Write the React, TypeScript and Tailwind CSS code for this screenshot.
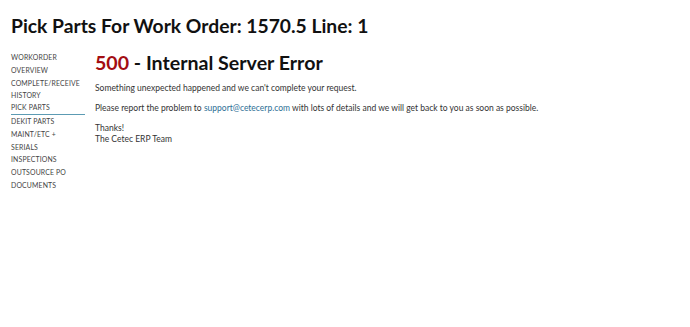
import React from 'react';

const navItems = [
  'WORKORDER',
  'OVERVIEW',
  'COMPLETE/RECEIVE',
  'HISTORY',
  'PICK PARTS',
  'DEKIT PARTS',
  'MAINT/ETC +',
  'SERIALS',
  'INSPECTIONS',
  'OUTSOURCE PO',
  'DOCUMENTS',
];

export default function App() {
  return (
    <div className="min-h-[327px] w-[690px] bg-white text-[#222] font-['Lato',sans-serif]">
      <h1 className="pl-[11px] pt-[14px] text-[19.3px] font-bold leading-[24px] text-[#111]">
        Pick Parts For Work Order: 1570.5 Line: 1
      </h1>

      <div className="flex pl-[11px] pt-[13px]">
        <ul className="w-[74px] shrink-0 text-[6.9px] leading-[12.8px] text-[#444] tracking-[0.15px]">
          {navItems.map((item) => (
            <li
              key={item}
              className={item === 'PICK PARTS' ? 'border-b border-[#5c9bb3] leading-[11.8px]' : ''}
            >
              {item}
            </li>
          ))}
        </ul>

        <div className="ml-[10px]">
          <h2 className="text-[19.6px] font-bold leading-[24px] text-[#111]">
            <span className="text-[#a30d12]">500</span> - Internal Server Error
          </h2>
          <div className="mt-[8px] text-[8.5px] leading-[11px] text-[#333]">
            <p>Something unexpected happened and we can't complete your request.</p>
            <p className="mt-[9px]">
              Please report the problem to{' '}
              <span className="text-[#2e6f96]">support@cetecerp.com</span> with lots of details and
              we will get back to you as soon as possible.
            </p>
            <p className="mt-[9px]">
              Thanks!
              <br />
              The Cetec ERP Team
            </p>
          </div>
        </div>
      </div>
    </div>
  );
}
